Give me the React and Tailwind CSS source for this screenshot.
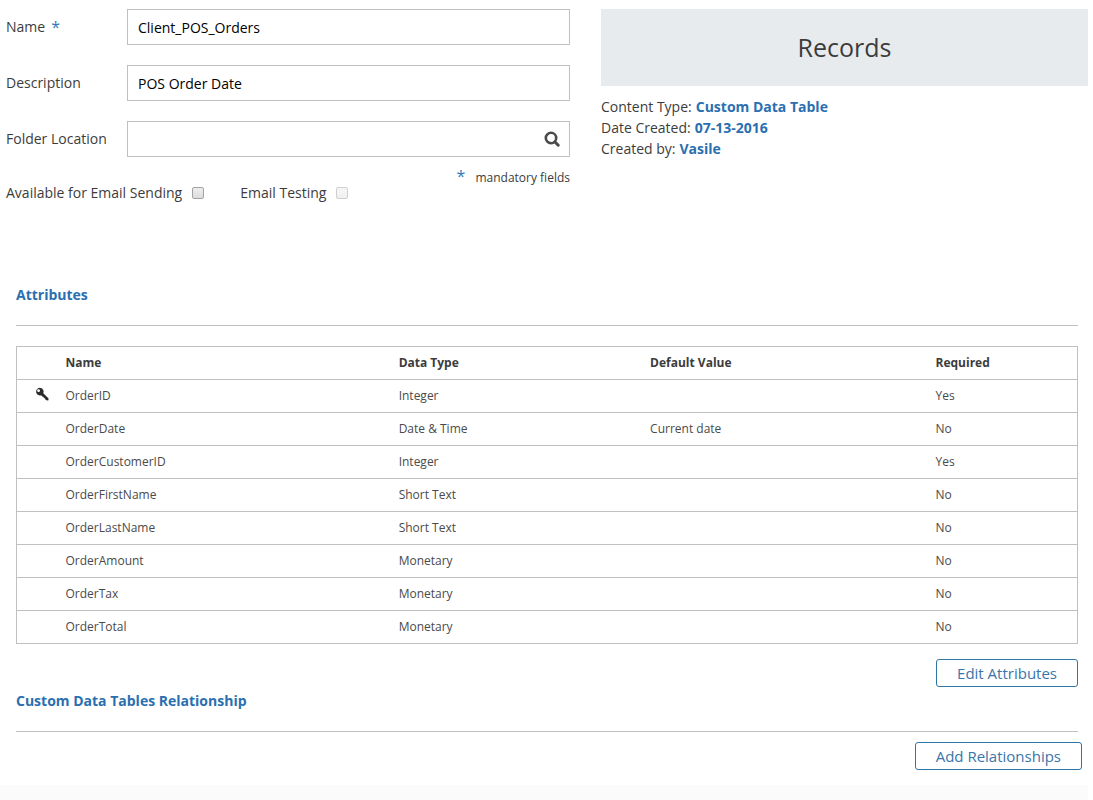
import React, { useState } from 'react';

const attributes = [
  { name: 'OrderID', type: 'Integer', defaultValue: '', required: true, isKey: true },
  { name: 'OrderDate', type: 'Date & Time', defaultValue: 'Current date', required: false },
  { name: 'OrderCustomerID', type: 'Integer', defaultValue: '', required: true },
  { name: 'OrderFirstName', type: 'Short Text', defaultValue: '', required: false },
  { name: 'OrderLastName', type: 'Short Text', defaultValue: '', required: false },
  { name: 'OrderAmount', type: 'Monetary', defaultValue: '', required: false },
  { name: 'OrderTax', type: 'Monetary', defaultValue: '', required: false },
  { name: 'OrderTotal', type: 'Monetary', defaultValue: '', required: false },
];

const details = [
  { label: 'Content Type', value: 'Custom Data Table' },
  { label: 'Date Created', value: '07-13-2016' },
  { label: 'Created by', value: 'Vasile' },
];

function SearchIcon() {
  return (
    <svg viewBox="0 0 16 16" className="w-4 h-4" fill="none" stroke="#4a4a4a" aria-hidden="true">
      <circle cx="7" cy="7" r="5.2" strokeWidth="2.6" />
      <path d="M10.8 10.8 14.2 14.2" strokeWidth="3" strokeLinecap="round" />
    </svg>
  );
}

function KeyIcon() {
  return (
    <svg viewBox="0 0 14 14" className="mb-1 w-3.5 h-3.5" role="img" aria-label="Primary key">
      <path
        fill="#2b2b2b"
        fillRule="evenodd"
        d="M4.6.8a3.9 3.9 0 1 0 1.2 7.7l1.1.2.6 1.1 1 .2.4 1.1 1 .2.5 1.1 1 .8 1.9.2.3-2-5.3-5.1A3.9 3.9 0 0 0 4.6.8ZM3.6 2.3a1.4 1.4 0 1 1 0 2.8 1.4 1.4 0 0 1 0-2.8Z"
      />
    </svg>
  );
}

function TextField({ id, label, mandatory, value, onChange, children }) {
  return (
    <div className="flex items-center">
      <label htmlFor={id} className="flex w-[121px] shrink-0 gap-1.5 leading-5">
        {label}
        {mandatory && <span className="text-base leading-5 text-[#337ab7]">*</span>}
      </label>
      <div className="flex h-9 min-w-0 flex-1 items-center border border-[#c0c0c0] bg-white">
        <input
          id={id}
          type="text"
          value={value}
          onChange={(e) => onChange(e.target.value)}
          className="h-full min-w-0 flex-1 px-2.5 text-black outline-none"
        />
        {children}
      </div>
    </div>
  );
}

function CheckField({ label, checked, onChange, disabled }) {
  return (
    <label className="flex items-center gap-2.5 leading-5">
      {label}
      <input
        type="checkbox"
        checked={checked}
        disabled={disabled}
        onChange={(e) => onChange(e.target.checked)}
        className="h-3 w-3 appearance-none rounded-xs border border-[#a3a3a3] bg-linear-to-b from-[#eeeeee] to-[#dcdcdc] checked:from-[#5b9bd5] checked:to-[#337ab7] disabled:border-[#d0d0d0] disabled:from-[#f6f6f6] disabled:to-[#f0f0f0]"
      />
    </label>
  );
}

function SectionTitle({ children }) {
  return (
    <h2 className="border-b border-[#c0c0c0] pb-5 font-bold leading-5 text-[#2a6fb0]">{children}</h2>
  );
}

function OutlineButton({ children }) {
  return (
    <button
      type="button"
      className="h-7 rounded-[3px] border border-[#2e75a8] bg-white px-5 text-[15px] leading-5 text-[#3a75ab] hover:bg-[#f2f7fb]"
    >
      {children}
    </button>
  );
}

export default function App() {
  const [name, setName] = useState('Client_POS_Orders');
  const [description, setDescription] = useState('POS Order Date');
  const [folder, setFolder] = useState('');
  const [emailSending, setEmailSending] = useState(false);
  const [emailTesting, setEmailTesting] = useState(false);

  return (
    <div className="flex min-h-screen flex-col bg-white font-['Open_Sans',sans-serif] text-sm text-[#3c3c3c]">
      <main className="pb-[15px]">
        <div className="grid grid-cols-[564fr_487fr] gap-[31px] pl-1.5 pr-[5px] pt-[9px]">
          {/* Table details form */}
          <form onSubmit={(e) => e.preventDefault()}>
            <div className="space-y-5">
              <TextField id="name" label="Name" mandatory value={name} onChange={setName} />
              <TextField id="description" label="Description" value={description} onChange={setDescription} />
              <TextField id="folder" label="Folder Location" value={folder} onChange={setFolder}>
                <button type="button" aria-label="Search folders" className="px-[9px]">
                  <SearchIcon />
                </button>
              </TextField>
            </div>
            <div className="flex items-start justify-between pt-[11px]">
              <div className="flex gap-9 pt-[15px]">
                <CheckField label="Available for Email Sending" checked={emailSending} onChange={setEmailSending} />
                <CheckField label="Email Testing" checked={emailTesting} onChange={setEmailTesting} disabled />
              </div>
              <p className="flex gap-2.5 text-xs leading-5">
                <span className="text-base leading-4 text-[#337ab7]">*</span>
                mandatory fields
              </p>
            </div>
          </form>

          {/* Records summary */}
          <section>
            <h1 className="bg-[#e8ebee] py-5 text-center text-[25px] leading-[37px]">Records</h1>
            <dl className="pt-[11px] leading-5">
              {details.map((item) => (
                <div key={item.label} className="flex gap-1 pb-px">
                  <dt>{item.label}:</dt>
                  <dd className="font-bold text-[#2a6fb0]">{item.value}</dd>
                </div>
              ))}
            </dl>
          </section>
        </div>

        {/* Attributes */}
        <section className="pl-4 pr-[15px] pt-[82px]">
          <SectionTitle>Attributes</SectionTitle>
          <table className="mt-5 w-full table-fixed border-collapse border border-[#c0c0c0] text-left text-xs">
            <colgroup>
              <col className="w-[49px]" />
              <col className="w-[31.4%]" />
              <col className="w-[23.7%]" />
              <col className="w-[26.9%]" />
              <col />
            </colgroup>
            <thead>
              <tr className="h-[33px] border-b border-[#c0c0c0]">
                <th aria-label="Key" />
                <th scope="col">Name</th>
                <th scope="col">Data Type</th>
                <th scope="col">Default Value</th>
                <th scope="col">Required</th>
              </tr>
            </thead>
            <tbody>
              {attributes.map((attr) => (
                <tr key={attr.name} className="h-[33px] border-b border-[#c0c0c0] text-[#4a4a4a]">
                  <td className="pl-[18px]">{attr.isKey && <KeyIcon />}</td>
                  <td>{attr.name}</td>
                  <td>{attr.type}</td>
                  <td>{attr.defaultValue}</td>
                  <td>{attr.required ? 'Yes' : 'No'}</td>
                </tr>
              ))}
            </tbody>
          </table>
          <div className="flex justify-end pt-[15px]">
            <OutlineButton>Edit Attributes</OutlineButton>
          </div>
        </section>

        {/* Relationships */}
        <section className="pl-4 pr-[15px] pt-1">
          <SectionTitle>Custom Data Tables Relationship</SectionTitle>
        </section>
        <div className="flex justify-end pr-[11px] pt-2.5">
          <OutlineButton>Add Relationships</OutlineButton>
        </div>
      </main>
      <footer className="mr-[5px] min-h-[15px] flex-1 bg-[#fbfbfb]" />
    </div>
  );
}
